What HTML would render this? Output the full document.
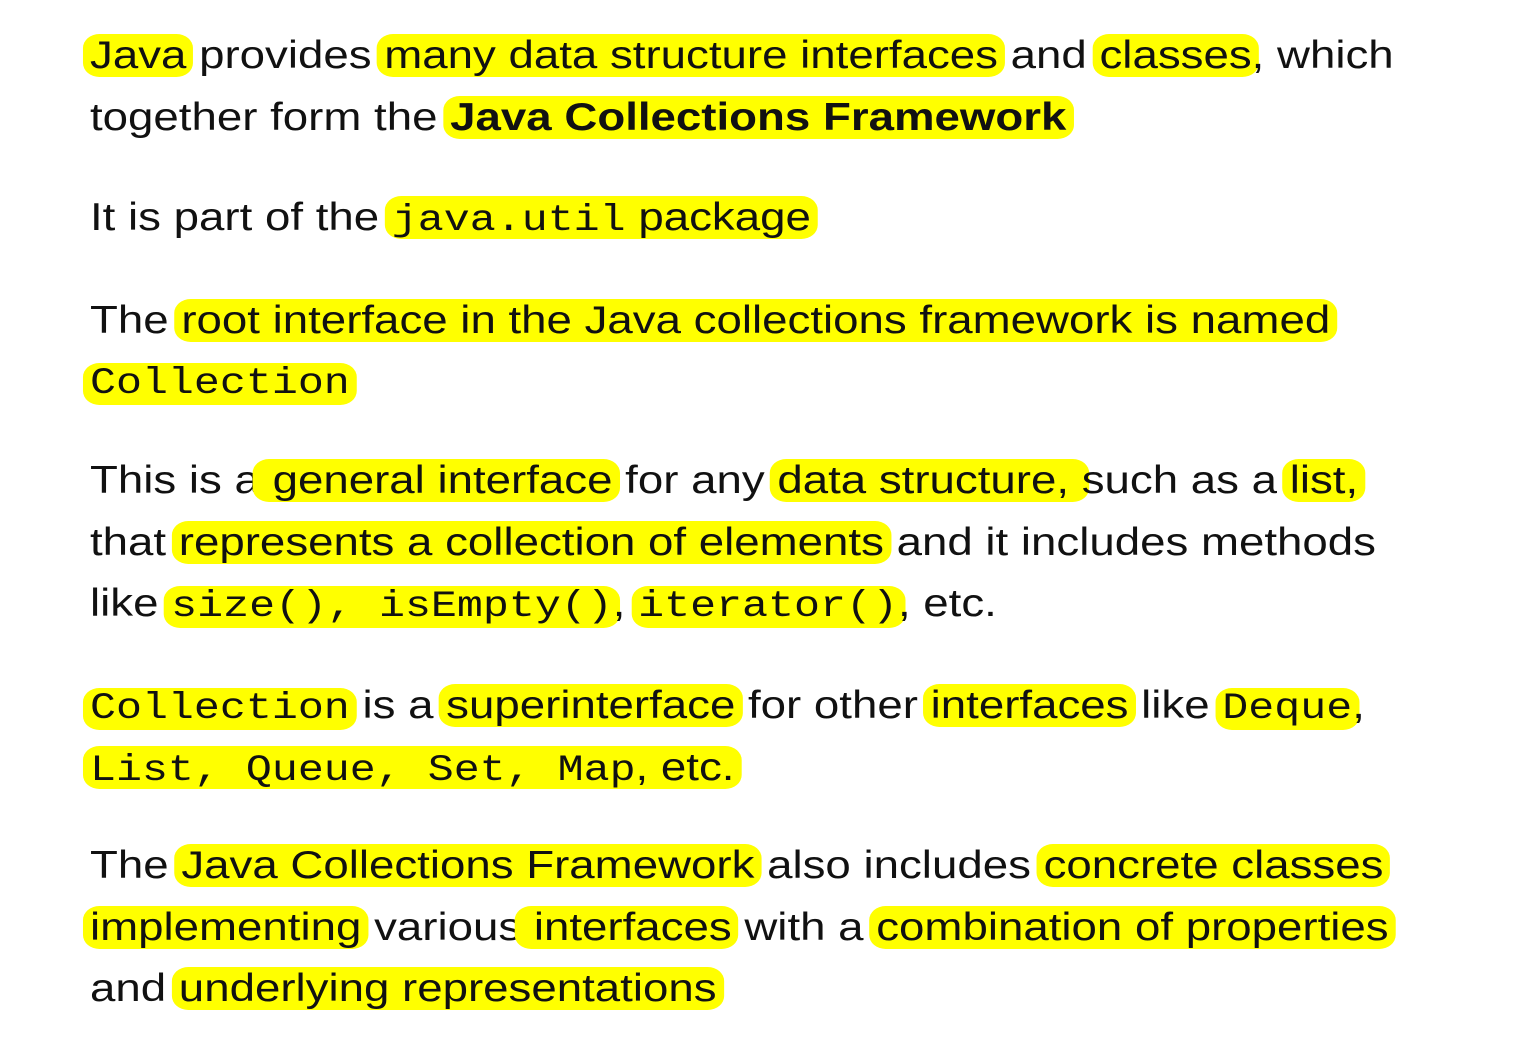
<!DOCTYPE html>
<html><head><meta charset="utf-8"><style>
html,body{margin:0;padding:0;background:#fff;}
body{width:1524px;height:1038px;position:relative;overflow:hidden;font-family:"Liberation Sans",sans-serif;font-size:39px;color:#111;}
.l{position:absolute;left:90px;white-space:nowrap;line-height:44px;height:44px;transform:scaleX(1.17);transform-origin:0 0;}
.h{background:#ffff00;border-radius:14px;padding:0 6px;margin:0 -6px;}
.m{font-family:"Liberation Mono",monospace;font-size:37px;}
b{font-weight:bold;}
</style></head><body>
<div class="l" style="top:34px"><span class="h">Java</span> provides <span class="h">many data structure interfaces</span> and <span class="h">classes</span>, which</div>
<div class="l" style="top:96px">together form the <span class="h"><b>Java Collections Framework</b></span></div>
<div class="l" style="top:196px">It is part of the <span class="h"><span class="m">java.util</span> package</span></div>
<div class="l" style="top:299px">The <span class="h">root interface in the Java collections framework is named</span></div>
<div class="l" style="top:359px"><span class="h m">Collection</span></div>
<div class="l" style="top:459px">This is a<span class="h"> general interface</span> for any <span class="h">data structure, </span>such as a <span class="h">list,</span></div>
<div class="l" style="top:521px">that <span class="h">represents a collection of elements</span> and it includes methods</div>
<div class="l" style="top:582px">like <span class="h m">size(), isEmpty()</span>, <span class="h m">iterator()</span>, etc.</div>
<div class="l" style="top:684px"><span class="h m">Collection</span> is a <span class="h">superinterface</span> for other <span class="h">interfaces</span> like <span class="h m">Deque</span>,</div>
<div class="l" style="top:746px"><span class="h"><span class="m">List, Queue, Set, Map</span>, etc.</span></div>
<div class="l" style="top:844px">The <span class="h">Java Collections Framework</span> also includes <span class="h">concrete classes</span></div>
<div class="l" style="top:906px"><span class="h">implementing</span> various<span class="h"> interfaces</span> with a <span class="h">combination of properties</span></div>
<div class="l" style="top:967px">and <span class="h">underlying representations</span></div>
</body></html>
